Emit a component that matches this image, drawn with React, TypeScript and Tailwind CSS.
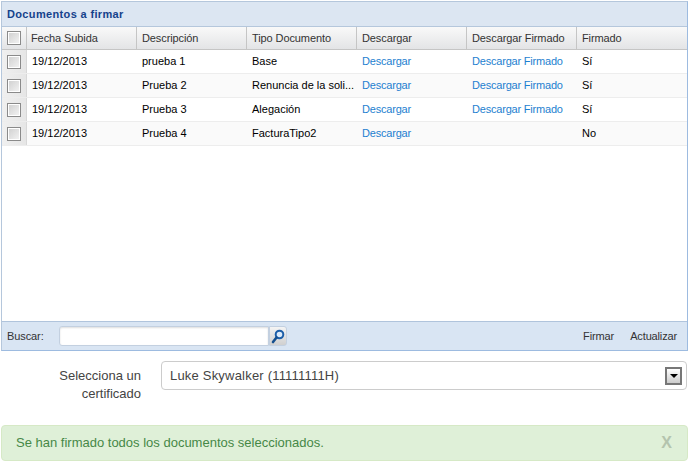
const rows = [
  { fecha: '19/12/2013', desc: 'prueba 1', tipo: 'Base', firmadoLink: true, firmado: 'Sí' },
  { fecha: '19/12/2013', desc: 'Prueba 2', tipo: 'Renuncia de la soli...', firmadoLink: true, firmado: 'Sí' },
  { fecha: '19/12/2013', desc: 'Prueba 3', tipo: 'Alegación', firmadoLink: true, firmado: 'Sí' },
  { fecha: '19/12/2013', desc: 'Prueba 4', tipo: 'FacturaTipo2', firmadoLink: false, firmado: 'No' },
]

const headers = ['Fecha Subida', 'Descripción', 'Tipo Documento', 'Descargar', 'Descargar Firmado', 'Firmado']

function Check() {
  return (
    <div className="w-[14px] h-[14px] border border-[#8a8a8a] bg-gradient-to-br from-[#cfcfcf] to-[#f4f4f4] shadow-[inset_0_0_0_1px_#fff]" />
  )
}

function SearchIcon() {
  return (
    <svg width="14" height="15" viewBox="0 0 14 15" fill="none">
      <circle cx="8.5" cy="5.5" r="3.8" fill="#dbeafa" stroke="#1c5ea8" strokeWidth="2" />
      <path d="M5.5 8.5 L2 13" stroke="#16508f" strokeWidth="2.6" strokeLinecap="round" />
    </svg>
  )
}

export default function App() {
  return (
    <div className="w-[689px] h-[462px] overflow-hidden bg-white pt-px pl-px pr-px font-['Liberation_Sans',sans-serif] text-[11px]">
      <div className="w-[687px] h-[350px] flex flex-col border border-[#b5c7dc] border-b-[#9dbbe0] border-r-[#9dbbe0]">
        <div className="h-[25px] flex items-center pl-[5px] bg-[#dce6f2] border-b border-[#b5c7dc] font-bold text-[#15428b] tracking-[0.35px]">
          Documentos a firmar
        </div>
        <div className="h-[23px] flex bg-gradient-to-b from-[#f9f9f9] to-[#e3e4e6] border-b border-[#c5c5c5] text-[#333] tracking-[-0.1px]">
          <div className="w-[25px] flex items-center justify-center pr-px border-r border-[#c5c5c5]">
            <Check />
          </div>
          {headers.map((h, i) => (
            <div
              key={h}
              className={`w-[110px] flex items-center ${i === 0 ? 'pl-[4px]' : 'pl-[5px]'} ${i < 5 ? 'border-r border-[#c5c5c5]' : ''}`}
            >
              {h}
            </div>
          ))}
        </div>
        <div className="flex-1">
          {rows.map((r, i) => (
            <div
              key={r.desc}
              className={`h-[24px] flex border-b border-[#ededed] text-black ${i % 2 ? 'bg-[#fafafa]' : 'bg-white'}`}
            >
              <div className="w-[25px] flex items-center justify-center pr-px bg-gradient-to-r from-[#f0f0f0] to-[#e6e6e6] border-r border-[#d8d8d8]">
                <Check />
              </div>
              <div className="w-[110px] flex items-center pl-[5px]">{r.fecha}</div>
              <div className="w-[110px] flex items-center pl-[5px]">{r.desc}</div>
              <div className="w-[110px] flex items-center pl-[5px]">{r.tipo}</div>
              <div className="w-[110px] flex items-center pl-[5px] text-[#1e7fd0] tracking-[-0.2px]">Descargar</div>
              <div className="w-[110px] flex items-center pl-[5px] text-[#1e7fd0] tracking-[-0.2px]">
                {r.firmadoLink ? 'Descargar Firmado' : ''}
              </div>
              <div className="w-[110px] flex items-center pl-[5px]">{r.firmado}</div>
            </div>
          ))}
        </div>
        <div className="h-[29px] flex items-center bg-[#d9e5f3] border-t border-[#b0c4dc] pl-[5px] pr-[10px] text-[#333] tracking-[-0.1px]">
          <span className="w-[52px]">Buscar:</span>
          <div className="w-[210px] h-[20px] bg-white border border-[#c3d0e0] rounded-l-[3px] shadow-[inset_0_1px_2px_#ddd]" />
          <div className="w-[18px] h-[20px] flex items-center justify-center bg-gradient-to-b from-[#f4f4f4] to-[#d0d0d0] border border-[#c3d0e0] rounded-r-[3px]">
            <SearchIcon />
          </div>
          <span className="ml-auto">Firmar</span>
          <span className="ml-[16px] tracking-[-0.15px]">Actualizar</span>
        </div>
      </div>

      <div className="flex mt-[10px] text-[13px] text-[#444]">
        <div className="ml-[40px] w-[100px] text-right leading-[18px] pt-[6px]">Selecciona un certificado</div>
        <div className="ml-[20px] w-[526px] h-[29px] flex items-center justify-between pl-[8px] pr-[4px] bg-white border border-[#ccc] rounded-[4px] tracking-[0.2px]">
          <span>Luke Skywalker (11111111H)</span>
          <div className="w-[17px] h-[18px] flex items-center justify-center border-2 border-[#777] bg-gradient-to-b from-white to-[#ccc]">
            <div className="w-0 h-0 border-x-[4px] border-x-transparent border-t-[4px] border-t-black" />
          </div>
        </div>
      </div>

      <div className="mt-[22px] w-[687px] h-[36px] flex items-center justify-between pl-[14px] pr-[15px] bg-[#dff0d8] border border-[#d6e9c6] rounded-[4px] text-[13px] text-[#468847]">
        <span>Se han firmado todos los documentos seleccionados.</span>
        <span className="font-bold text-[16px] text-[#b4c4ae]">X</span>
      </div>
    </div>
  )
}
